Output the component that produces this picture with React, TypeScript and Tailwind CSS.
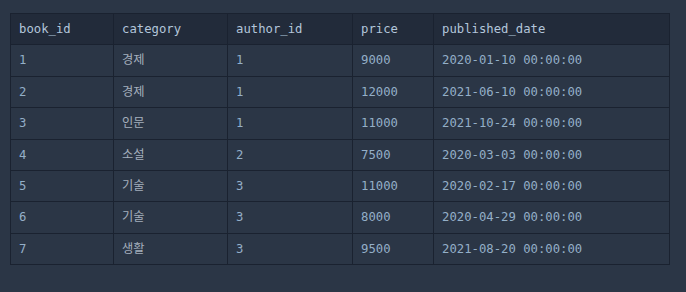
import React from "react";

const cols = ["book_id", "category", "author_id", "price", "published_date"];
const widths = ["w-[103px]", "w-[114px]", "w-[125px]", "w-[81px]", "w-[236px]"];
const rows = [
  ["1", "경제", "1", "9000", "2020-01-10 00:00:00"],
  ["2", "경제", "1", "12000", "2021-06-10 00:00:00"],
  ["3", "인문", "1", "11000", "2021-10-24 00:00:00"],
  ["4", "소설", "2", "7500", "2020-03-03 00:00:00"],
  ["5", "기술", "3", "11000", "2020-02-17 00:00:00"],
  ["6", "기술", "3", "8000", "2020-04-29 00:00:00"],
  ["7", "생활", "3", "9500", "2021-08-20 00:00:00"],
];

export default function App() {
  return (
    <div
      className="w-[686px] h-[292px] bg-[#2b3646] pt-[13px] pl-[10px]"
      style={{ fontFamily: '"DejaVu Sans Mono", "Noto Sans CJK KR", monospace' }}
    >
      <table className="border-collapse text-[12.25px] leading-[20.4px]">
        <thead>
          <tr className="bg-[#222b3a]">
            {cols.map((c, i) => (
              <th
                key={c}
                className={`${widths[i]} border border-[#1a2230] pl-[8px] py-[5px] text-left font-normal text-[#b3c6da]`}
              >
                {c}
              </th>
            ))}
          </tr>
        </thead>
        <tbody>
          {rows.map((r, ri) => (
            <tr key={ri} className="bg-[#2b3646]">
              {r.map((v, ci) => (
                <td
                  key={ci}
                  className={`border border-[#1a2230] pl-[8px] py-[5px] ${ci === 1 ? "text-[#a4afbd]" : "text-[#94afc8]"}`}
                >
                  {v}
                </td>
              ))}
            </tr>
          ))}
        </tbody>
      </table>
    </div>
  );
}
